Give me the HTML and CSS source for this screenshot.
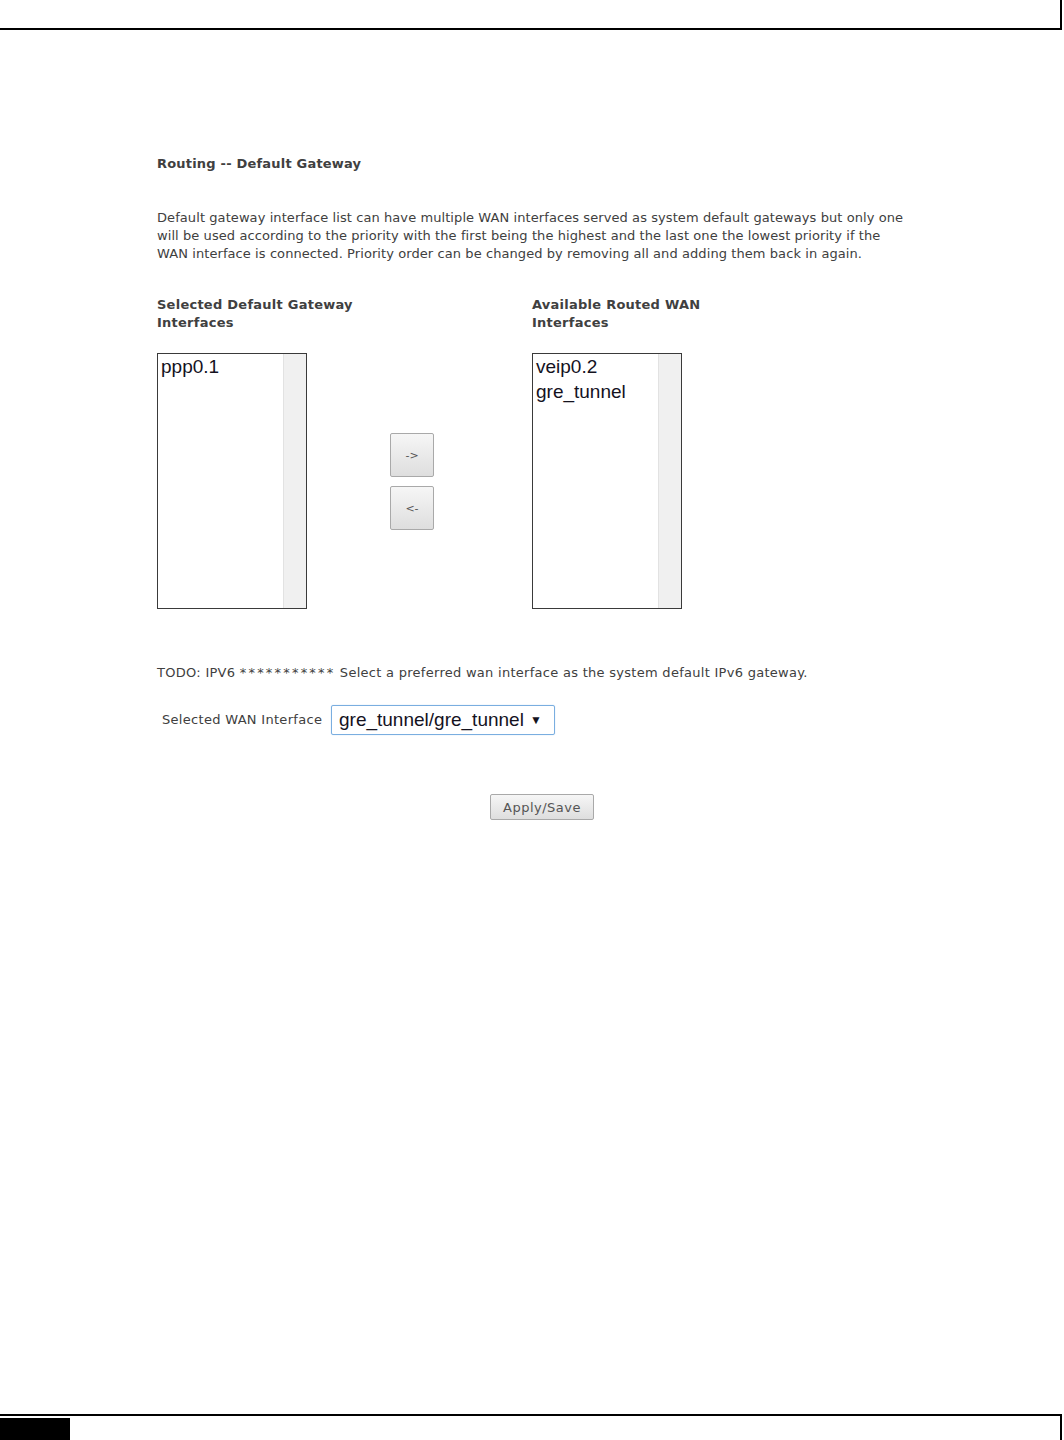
FILE: index.html
```html
<!DOCTYPE html>
<html>
  <head>
    <meta charset="utf-8">
    <title>Routing -- Default Gateway</title>
    <link rel="stylesheet" href="styles.css">
  </head>
  <body>
    <div class="frame-top"></div>

    <div class="content">
      <div class="title">Routing -- Default Gateway</div>

      <p class="intro">
        Default gateway interface list can have multiple WAN interfaces served as system default gateways but only one<br>
        will be used according to the priority with the first being the highest and the last one the lowest priority if the<br>
        WAN interface is connected. Priority order can be changed by removing all and adding them back in again.
      </p>

      <div class="lists">
        <div class="list-label">Selected Default Gateway<br>Interfaces</div>
        <div></div>
        <div class="list-label">Available Routed WAN<br>Interfaces</div>

        <div class="listbox">
          <div class="options">
            <div class="option">ppp0.1</div>
          </div>
          <div class="scrollbar"></div>
        </div>

        <div class="movers">
          <button class="btn mover">-&gt;</button>
          <button class="btn mover">&lt;-</button>
        </div>

        <div class="listbox">
          <div class="options">
            <div class="option">veip0.2</div>
            <div class="option">gre_tunnel</div>
          </div>
          <div class="scrollbar"></div>
        </div>
      </div>

      <p class="todo">TODO: IPV6 <span class="stars">***********</span> Select a preferred wan interface as the system default IPv6 gateway.</p>

      <div class="wan-row">
        <span class="wan-label">Selected WAN Interface</span>
        <div class="dropdown">
          <span>gre_tunnel/gre_tunnel</span>
          <span class="caret">&#9660;</span>
        </div>
      </div>

      <div class="actions">
        <button class="btn apply">Apply/Save</button>
      </div>
    </div>

    <div class="frame-bottom">
      <div class="tab"></div>
    </div>
  </body>
</html>
```

FILE: styles.css
```css
html, body, p, div {margin:0;padding:0}

body {
  width: 1064px;
  height: 1440px;
  display: flex;
  flex-direction: column;
  background: #fff;
  color: #404040;
  font-family: 'DejaVu Sans', sans-serif;
  font-size: 13px;
  line-height: 18px;
}

.frame-top {
  height: 28px;
  width: 1060px;
  border-bottom: 2px solid #000;
  border-right: 2px solid #000;
}

.content {
  flex: 1;
  width: 770px;
  padding-left: 157px;
}

.title {
  margin-top: 125px;
  font-weight: bold;
  letter-spacing: 0.2px;
}

.intro {
  margin-top: 36px;
  letter-spacing: 0.08px;
}

.lists {
  margin-top: 33px;
  display: grid;
  grid-template-columns: 233px 142px 240px;
  grid-template-rows: 36px 256px;
  row-gap: 21px;
}

.list-label {
  font-weight: bold;
  white-space: nowrap;
  letter-spacing: 0.25px;
}

.listbox {
  display: flex;
  width: 150px;
  height: 256px;
  box-sizing: border-box;
  border: 1px solid #3a3a3a;
  background: #fff;
}

.options {
  flex: 1;
  padding: 0 0 0 3px;
  font-family: 'Liberation Sans', Arial, sans-serif;
  font-size: 19px;
  line-height: 25px;
  color: #14121e;
}

.scrollbar {
  width: 22px;
  background: #f0f0f0;
  border-left: 1px solid #e2e2e2;
}

.movers {
  display: flex;
  flex-direction: column;
  gap: 9px;
  padding-top: 80px;
}

.btn {
  font-family: 'DejaVu Sans', sans-serif;
  color: #555;
  border: 1px solid #a9a9a9;
  border-radius: 2px;
  background: linear-gradient(#f6f6f6, #dedede);
  padding: 0;
}

.mover {
  width: 44px;
  height: 44px;
  font-size: 11px;
}

.todo {
  margin-top: 55px;
  letter-spacing: 0.28px;
}

.stars {
  letter-spacing: 2.2px;
}

.wan-row {
  margin-top: 23px;
  display: flex;
  align-items: center;
}

.wan-label {
  width: 169px;
  margin-left: 5px;
  letter-spacing: 0.3px;
}

.dropdown {
  display: flex;
  align-items: center;
  justify-content: space-between;
  box-sizing: border-box;
  width: 224px;
  height: 30px;
  padding: 0 12px 0 7px;
  border: 1px solid #7aaee0;
  border-radius: 2px;
  box-shadow: 0 0 1px #9cc4ec;
  font-family: 'Liberation Sans', Arial, sans-serif;
  font-size: 19px;
  color: #14121e;
}

.caret {
  font-size: 12px;
}

.actions {
  margin-top: 59px;
  display: flex;
  justify-content: center;
}

.apply {
  width: 104px;
  height: 26px;
  font-size: 13px;
  letter-spacing: 0.5px;
}

.frame-bottom {
  height: 22px;
  width: 1060px;
  border-top: 2px solid #000;
  border-right: 2px solid #000;
  padding-top: 2px;
}

.tab {
  width: 70px;
  height: 22px;
  background: #000;
}
```
